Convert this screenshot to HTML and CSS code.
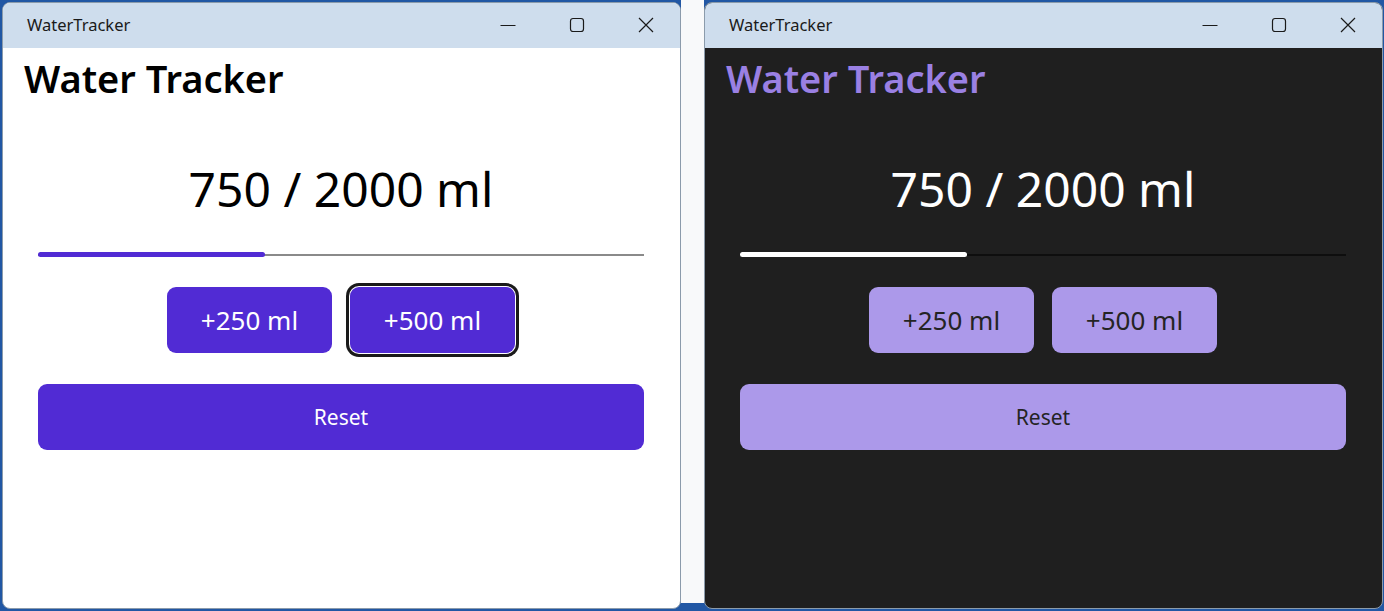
FILE: index.html
```html
<!DOCTYPE html>
<html lang="en">
<head>
  <meta charset="UTF-8" />
  <title>WaterTracker</title>
  <link rel="stylesheet" href="styles.css">
</head>
<body>
  <div class="desktop">

    <!-- Light theme -->
    <div class="window light">
      <div class="titlebar">
        <span class="app-name">WaterTracker</span>
        <div class="caption">
          <div class="cap-btn">
            <svg width="16" height="16" viewBox="0 0 16 16"><path d="M0.5 8.5h15" stroke="#1a1a1a" stroke-width="1.2" fill="none"/></svg>
          </div>
          <div class="cap-btn">
            <svg width="16" height="16" viewBox="0 0 16 16"><rect x="1.5" y="1.5" width="13" height="13" rx="2.5" stroke="#1a1a1a" stroke-width="1.2" fill="none"/></svg>
          </div>
          <div class="cap-btn">
            <svg width="16" height="16" viewBox="0 0 16 16"><path d="M1 1L15 15M15 1L1 15" stroke="#1a1a1a" stroke-width="1.2" fill="none"/></svg>
          </div>
        </div>
      </div>
      <div class="page">
        <h1 class="heading">Water Tracker</h1>
        <div class="counter">750 / 2000 ml</div>
        <div class="progress">
          <div class="progress-fill" style="width: 37.5%"></div>
        </div>
        <div class="add-row">
          <button class="btn">+250 ml</button>
          <button class="btn focused">+500 ml</button>
        </div>
        <button class="btn reset">Reset</button>
      </div>
    </div>

    <div class="gap"></div>

    <!-- Dark theme -->
    <div class="window dark">
      <div class="titlebar">
        <span class="app-name">WaterTracker</span>
        <div class="caption">
          <div class="cap-btn">
            <svg width="16" height="16" viewBox="0 0 16 16"><path d="M0.5 8.5h15" stroke="#1a1a1a" stroke-width="1.2" fill="none"/></svg>
          </div>
          <div class="cap-btn">
            <svg width="16" height="16" viewBox="0 0 16 16"><rect x="1.5" y="1.5" width="13" height="13" rx="2.5" stroke="#1a1a1a" stroke-width="1.2" fill="none"/></svg>
          </div>
          <div class="cap-btn">
            <svg width="16" height="16" viewBox="0 0 16 16"><path d="M1 1L15 15M15 1L1 15" stroke="#1a1a1a" stroke-width="1.2" fill="none"/></svg>
          </div>
        </div>
      </div>
      <div class="page">
        <h1 class="heading">Water Tracker</h1>
        <div class="counter">750 / 2000 ml</div>
        <div class="progress">
          <div class="progress-fill" style="width: 37.5%"></div>
        </div>
        <div class="add-row">
          <button class="btn">+250 ml</button>
          <button class="btn">+500 ml</button>
        </div>
        <button class="btn reset">Reset</button>
      </div>
    </div>

  </div>
</body>
</html>
```

FILE: styles.css
```css
* {
  box-sizing: border-box;
}

body {
  margin: 0;
  font-family: 'Noto Sans', 'Open Sans', sans-serif;
  background: #2157a4;
  height: 611px;
  overflow: hidden;
}

.desktop {
  display: flex;
  padding: 2px 1px 2px 2px;
  height: 100%;
}

.gap {
  width: 23px;
  flex-shrink: 0;
  background: #f8f9fa;
  margin: -2px 0 6px;
}

.window {
  width: 679px;
  height: 607px;
  flex-shrink: 0;
  display: flex;
  flex-direction: column;
  border: 1px solid #8b9bab;
  border-radius: 8px;
  overflow: hidden;
}

.window.light {
  background: #ffffff;
}

.window.dark {
  background: #1f1f1f;
}

/* title bar */

.titlebar {
  height: 45px;
  flex-shrink: 0;
  display: flex;
  align-items: center;
  justify-content: space-between;
  background: #cedded;
}

.app-name {
  padding-left: 24px;
  font-size: 16.5px;
  color: #1a1a1a;
  padding-bottom: 2px;
}

.caption {
  display: flex;
  height: 100%;
}

.cap-btn {
  width: 69px;
  height: 100%;
  display: flex;
  align-items: center;
  justify-content: center;
  padding-bottom: 2px;
}

/* content */

.page {
  display: flex;
  flex-direction: column;
  padding: 7px 36px 0 35px;
}

.heading {
  margin: 0 0 0 -14px;
  font-size: 38px;
  font-weight: 600;
  line-height: 46px;
}

.light .heading {
  color: #000;
}

.dark .heading {
  color: #9a80e3;
}

.counter {
  margin-top: 56px;
  font-size: 48px;
  line-height: 64px;
  text-align: center;
}

.light .counter {
  color: #000;
}

.dark .counter {
  color: #fff;
}

.progress {
  margin-top: 31px;
  height: 5px;
  position: relative;
  display: flex;
  align-items: center;
}

.progress::before {
  content: "";
  flex: 1;
  height: 2px;
}

.light .progress::before {
  background: #8a8a8a;
}

.dark .progress::before {
  background: #0e0e0e;
}

.progress-fill {
  position: absolute;
  left: 0;
  top: 0;
  height: 5px;
  border-radius: 3px;
}

.light .progress-fill {
  background: #512bd4;
}

.dark .progress-fill {
  background: #ffffff;
}

.add-row {
  display: flex;
  justify-content: center;
  gap: 18px;
  margin-top: 30px;
}

.btn {
  font-family: 'Noto Sans', 'Open Sans', sans-serif;
  height: 66px;
  border: none;
  border-radius: 9px;
  font-size: 26px;
  padding: 0;
  width: 165px;
}

.light .btn {
  background: #512bd4;
  color: #fff;
}

.dark .btn {
  background: #ac99ea;
  color: #242424;
}

.btn.focused {
  box-shadow: 0 0 0 1px #fff, 0 0 0 4px #1a1a1a;
}

.btn.reset {
  width: 100%;
  margin-top: 31px;
  font-size: 21px;
}
```
